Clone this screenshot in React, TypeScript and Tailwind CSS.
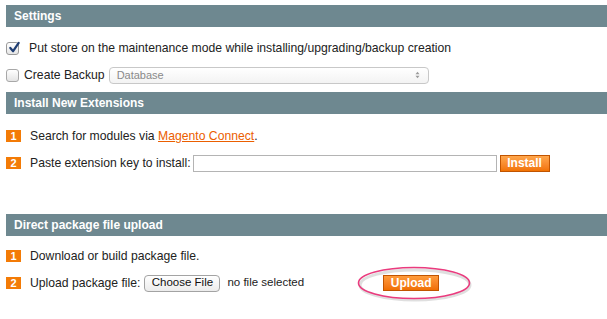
import React from "react";

const Badge = ({ n }: { n: string }) => (
  <span className="inline-flex items-center justify-center w-[15px] h-[12px] bg-[#f37b06] text-white font-bold text-[11px] leading-none mr-[9px] shrink-0">
    {n}
  </span>
);

const Header = ({ title }: { title: string }) => (
  <div className="h-[22px] bg-[#6e8890] flex items-center pl-[8px] text-white font-bold text-[12px]">
    {title}
  </div>
);

export default function App() {
  return (
    <div
      className="w-[607px] h-[319px] bg-white text-[#222] text-[12.2px] overflow-hidden"
      style={{ fontFamily: "Helvetica, Arial, 'Liberation Sans', sans-serif" }}
    >
      <div className="ml-[6px] pt-[5px]">
        <Header title="Settings" />
        <div className="h-[15px]" />
        <div className="flex items-center h-[13px]">
          <span className="w-[13px] h-[13px] border border-[#9a9a9a] rounded-[3px] bg-gradient-to-b from-white to-[#e6e6e6] relative mr-[10px]">
            <svg viewBox="0 0 14 14" className="absolute left-[1px] -top-[2px] w-[13px] h-[13px]">
              <path d="M2.5 7.5 L5.5 11 L11.5 2" stroke="#1f3e73" strokeWidth="2.4" fill="none" strokeLinecap="round" strokeLinejoin="round" />
            </svg>
          </span>
          <span>Put store on the maintenance mode while installing/upgrading/backup creation</span>
        </div>
        <div className="h-[11px]" />
        <div className="flex items-center h-[18px]">
          <span className="w-[13px] h-[13px] border border-[#a8a8a8] rounded-[3px] bg-gradient-to-b from-white to-[#e4e4e4] mr-[5px]" />
          <span className="mr-[4px]">Create Backup</span>
          <div className="w-[320px] h-[17px] border border-[#c8c8c8] rounded-[4px] bg-gradient-to-b from-white to-[#f3f3f3] flex items-center justify-between pl-[7px] pr-[8px] text-[#8a8a8a] text-[11px]">
            <span>Database</span>
            <svg viewBox="0 0 6 10" className="w-[5px] h-[8px]">
              <path d="M0.5 4 L3 1 L5.5 4 Z" fill="#9a9a9a" />
              <path d="M0.5 6 L3 9 L5.5 6 Z" fill="#9a9a9a" />
            </svg>
          </div>
        </div>
        <div className="h-[8px]" />
        <Header title="Install New Extensions" />
        <div className="h-[16px]" />
        <div className="flex items-center h-[12px]">
          <Badge n="1" />
          <span>
            Search for modules via{" "}
            <span className="text-[#eb5e00] underline">Magento Connect</span>.
          </span>
        </div>
        <div className="h-[12px]" />
        <div className="flex items-center h-[18px]">
          <Badge n="2" />
          <span className="mr-[2px]">Paste extension key to install:</span>
          <div className="w-[304px] h-[17px] border border-[#b4b4b4] bg-white" />
          <button className="ml-[3px] w-[50px] h-[17px] bg-gradient-to-b from-[#ffa64a] to-[#f27300] border border-[#c15400] text-white font-bold text-[12px] leading-none">
            Install
          </button>
        </div>
        <div className="h-[42px]" />
        <Header title="Direct package file upload" />
        <div className="h-[14px]" />
        <div className="flex items-center h-[12px]">
          <Badge n="1" />
          <span>Download or build package file.</span>
        </div>
        <div className="h-[12px]" />
        <div className="flex items-center h-[18px]">
          <Badge n="2" />
          <span className="mr-[4px]">Upload package file:</span>
          <button className="w-[76px] h-[17px] border border-[#a3a3a3] rounded-[4px] bg-gradient-to-b from-white to-[#ececec] text-[#111] text-[11.5px] leading-none">
            Choose File
          </button>
          <span className="ml-[7px] text-[11.5px] text-[#222]">no file selected</span>
          <div className="relative ml-[79px]">
            <button className="w-[56px] h-[16px] bg-gradient-to-b from-[#ff9b3a] to-[#f06f00] border border-[#c15400] text-white font-bold text-[12px] leading-none">
              Upload
            </button>
            <svg className="absolute -left-[26px] -top-[8px] w-[114px] h-[34px] overflow-visible" viewBox="0 0 114 34">
              <ellipse cx="58" cy="19" rx="55" ry="15" fill="none" stroke="#c9c9c9" strokeWidth="3" opacity="0.6" />
              <ellipse cx="57" cy="17" rx="55.5" ry="15.5" fill="none" stroke="#ea3b7e" strokeWidth="1.6" />
            </svg>
          </div>
        </div>
      </div>
    </div>
  );
}
